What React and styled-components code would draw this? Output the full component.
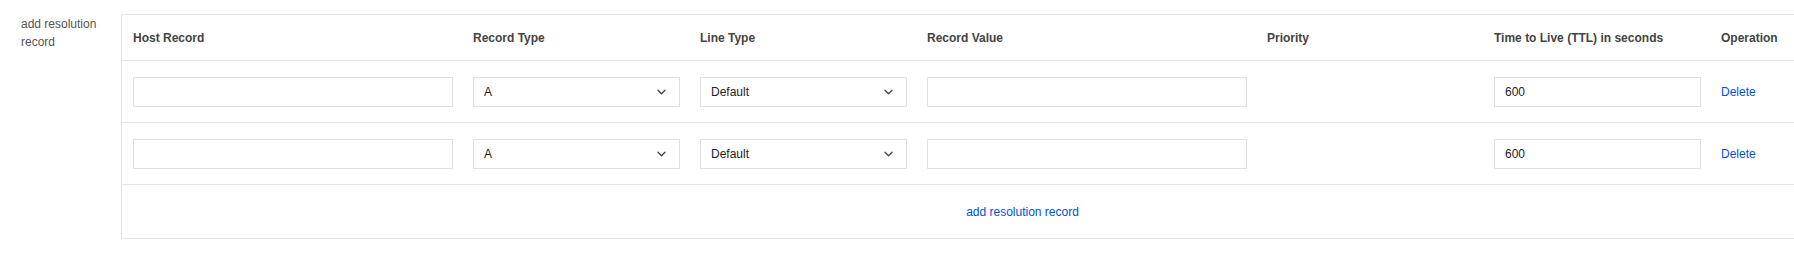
import React, { useState } from 'react';
import styled, { createGlobalStyle } from 'styled-components';

const GlobalStyle = createGlobalStyle`
  html, body {
    margin: 0;
    padding: 0;
    overflow: hidden;
    background: #fff;
  }
  body {
    font-family: "Liberation Sans", Arial, sans-serif;
    font-size: 12px;
    color: #333;
  }
`;

const COLUMNS = '340px 227px 227px 340px 227px 227px 213px';

const initialRows = [
  { id: 1, host: '', type: 'A', line: 'Default', value: '', priority: '', ttl: '600' },
  { id: 2, host: '', type: 'A', line: 'Default', value: '', priority: '', ttl: '600' },
];

const Chevron = () => (
  <svg width="9" height="6" viewBox="0 0 9 6" fill="none">
    <path d="M1 1.2l3.5 3.5 3.5-3.5" stroke="#444" strokeWidth="1.3" strokeLinecap="round" strokeLinejoin="round" />
  </svg>
);

const App = () => {
  const [rows, setRows] = useState(initialRows);

  const addRow = () => {
    setRows([
      ...rows,
      { id: Date.now(), host: '', type: 'A', line: 'Default', value: '', priority: '', ttl: '600' },
    ]);
  };

  const removeRow = (id) => setRows(rows.filter((r) => r.id !== id));

  return (
    <>
      <GlobalStyle />
      <Page>
        <Label>add resolution record</Label>
        <Table>
          <HeaderRow>
            <HeadCell>Host Record</HeadCell>
            <HeadCell>Record Type</HeadCell>
            <HeadCell>Line Type</HeadCell>
            <HeadCell>Record Value</HeadCell>
            <HeadCell>Priority</HeadCell>
            <HeadCell>Time to Live (TTL) in seconds</HeadCell>
            <HeadCell>Operation</HeadCell>
          </HeaderRow>
          {rows.map((row) => (
            <BodyRow key={row.id}>
              <Cell>
                <Input defaultValue={row.host} />
              </Cell>
              <Cell>
                <Select>
                  <span>{row.type}</span>
                  <Chevron />
                </Select>
              </Cell>
              <Cell>
                <Select>
                  <span>{row.line}</span>
                  <Chevron />
                </Select>
              </Cell>
              <Cell>
                <Input defaultValue={row.value} />
              </Cell>
              <Cell />
              <Cell>
                <Input defaultValue={row.ttl} />
              </Cell>
              <Cell>
                <LinkButton onClick={() => removeRow(row.id)}>Delete</LinkButton>
              </Cell>
            </BodyRow>
          ))}
          <Footer>
            <LinkButton onClick={addRow}>add resolution record</LinkButton>
          </Footer>
        </Table>
      </Page>
    </>
  );
};

const Page = styled.div`
  display: flex;
  align-items: flex-start;
  padding: 14px 0 15px 21px;
`;

const Label = styled.div`
  width: 84px;
  flex-shrink: 0;
  padding-top: 1px;
  padding-right: 16px;
  line-height: 18px;
  color: #555;
`;

const Table = styled.div`
  flex-shrink: 0;
  width: 1801px;
  border: 1px solid #e4e5ea;
`;

const HeaderRow = styled.div`
  display: grid;
  grid-template-columns: ${COLUMNS};
  height: 45px;
  align-items: center;
  border-bottom: 1px solid #e4e5ea;
`;

const HeadCell = styled.div`
  padding: 0 9px 0 11px;
  font-weight: bold;
  color: #444;
  white-space: nowrap;
`;

const BodyRow = styled.div`
  display: grid;
  grid-template-columns: ${COLUMNS};
  height: 61px;
  align-items: center;
  border-bottom: 1px solid #e4e5ea;
`;

const Cell = styled.div`
  padding: 0 9px 0 11px;
`;

const Input = styled.input`
  box-sizing: border-box;
  display: block;
  width: 100%;
  height: 30px;
  padding: 0 10px;
  border: 1px solid #dfe1e7;
  border-radius: 0;
  outline: none;
  font: inherit;
  color: #222;
  background: #fff;
`;

const Select = styled.div`
  box-sizing: border-box;
  display: flex;
  align-items: center;
  justify-content: space-between;
  width: 100%;
  height: 30px;
  padding: 0 13px 0 10px;
  border: 1px solid #dfe1e7;
  color: #222;
  cursor: pointer;
`;

const LinkButton = styled.span`
  color: #0052d9;
  cursor: pointer;
`;

const Footer = styled.div`
  display: flex;
  justify-content: center;
  align-items: center;
  height: 53px;
`;

export default App;
